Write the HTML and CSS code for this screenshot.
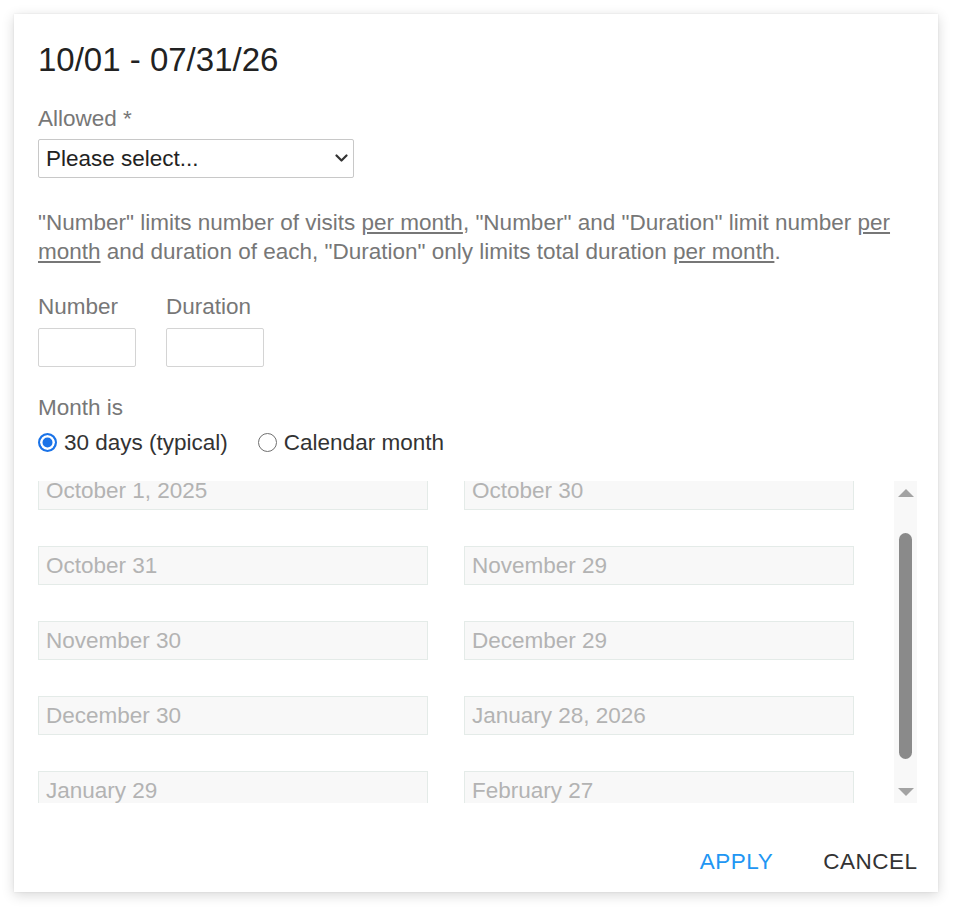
FILE: index.html
```html
<!DOCTYPE html>
<html lang="en">
<head>
<meta charset="utf-8">
<title>Allowed visits</title>
<link rel="stylesheet" href="styles.css">
</head>
<body>
<div class="page">
  <div class="dialog">
    <h1 class="title">10/01 - 07/31/26</h1>

    <label class="label label-allowed" for="allowed">Allowed *</label>
    <div class="select-wrap">
      <select id="allowed" class="select">
        <option>Please select...</option>
      </select>
      <svg class="chevron" width="13" height="9" viewBox="0 0 13 9"><polyline points="1.5,1.5 6.5,6.5 11.5,1.5" fill="none" stroke="#333" stroke-width="2.2" stroke-linecap="round" stroke-linejoin="round"/></svg>
    </div>

    <p class="help">"Number" limits number of visits <u>per month</u>, "Number" and "Duration" limit number <u>per month</u> and duration of each, "Duration" only limits total duration <u>per month</u>.</p>

    <div class="limits">
      <div class="limit">
        <label class="label">Number</label>
        <input class="small-input" type="text">
      </div>
      <div class="limit">
        <label class="label">Duration</label>
        <input class="small-input" type="text">
      </div>
    </div>

    <div class="label label-month">Month is</div>
    <div class="radios">
      <label class="radio"><input type="radio" name="month" checked><span>30 days (typical)</span></label>
      <label class="radio"><input type="radio" name="month"><span>Calendar month</span></label>
    </div>

    <div class="scroller">
      <div class="list">
        <div class="grid">
          <div class="field">October 1, 2025</div>
          <div class="field">October 30</div>
          <div class="field">October 31</div>
          <div class="field">November 29</div>
          <div class="field">November 30</div>
          <div class="field">December 29</div>
          <div class="field">December 30</div>
          <div class="field">January 28, 2026</div>
          <div class="field">January 29</div>
          <div class="field">February 27</div>
        </div>
      </div>
      <div class="scrollbar">
        <div class="sb-btn"><span class="tri-up"></span></div>
        <div class="sb-thumb"></div>
        <div class="sb-space"></div>
        <div class="sb-btn"><span class="tri-down"></span></div>
      </div>
    </div>

    <div class="actions">
      <button class="btn btn-apply">APPLY</button>
      <button class="btn btn-cancel">CANCEL</button>
    </div>
  </div>
</div>
</body>
</html>
```
FILE: styles.css
```css
* { box-sizing: border-box; }

html, body {
  margin: 0;
  padding: 0;
  background: #ffffff;
}

body {
  font-family: "Liberation Sans", Arial, sans-serif;
  font-size: 22.5px;
  color: #222;
}

.page {
  padding: 14px 20px 20px 14px;
}

.dialog {
  width: 924px;
  height: 878px;
  background: #fff;
  box-shadow: 0 3px 12px rgba(0, 0, 0, 0.16), 0 0 2px rgba(0, 0, 0, 0.08);
  padding: 26px 21px 16px 24px;
  display: flex;
  flex-direction: column;
}

.title {
  margin: 0;
  font-size: 33px;
  line-height: 40px;
  font-weight: 400;
  color: #222;
}

.label {
  display: block;
  font-size: 22.5px;
  line-height: 29px;
  color: #777;
}

.label-allowed {
  margin-top: 24px;
}

.select-wrap {
  position: relative;
  width: 316px;
  margin-top: 6px;
}

.select {
  appearance: none;
  -webkit-appearance: none;
  display: block;
  width: 316px;
  height: 39px;
  border: 1px solid #c8c8c8;
  border-radius: 2px;
  background: #fff;
  font-family: inherit;
  font-size: 22.5px;
  color: #222;
  padding: 0 30px 0 7px;
  outline: none;
}

.chevron {
  position: absolute;
  right: 6px;
  top: 15px;
  pointer-events: none;
}

.help {
  margin: 30px 0 0 0;
  font-size: 22.5px;
  line-height: 29px;
  color: #777;
}

.help u {
  text-decoration-color: #777;
  text-underline-offset: 2px;
}

.limits {
  display: flex;
  gap: 30px;
  margin-top: 26px;
}

.limit {
  display: flex;
  flex-direction: column;
}

.small-input {
  margin-top: 7px;
  width: 98px;
  height: 39px;
  border: 1px solid #d4d4d4;
  border-radius: 2px;
  background: #fff;
  font-family: inherit;
  font-size: 22.5px;
  outline: none;
}

.label-month {
  margin-top: 26px;
}

.radios {
  display: flex;
  gap: 30px;
  margin-top: 6px;
  line-height: 29px;
}

.radio {
  display: flex;
  align-items: center;
  gap: 7px;
  color: #333;
}

.radio input {
  appearance: none;
  -webkit-appearance: none;
  margin: 0;
  width: 19px;
  height: 19px;
  border-radius: 50%;
  border: 1.5px solid #707070;
  background: #fff;
}

.radio input:checked {
  border: 2px solid #1a73e8;
  background: #1a73e8;
  box-shadow: inset 0 0 0 2.5px #fff;
}

.scroller {
  display: flex;
  margin-top: 24px;
  height: 322px;
}

.list {
  flex: 1;
  overflow: hidden;
}

.grid {
  display: grid;
  grid-template-columns: 390px 390px;
  column-gap: 36px;
  row-gap: 36px;
  margin-top: -10px;
}

.field {
  height: 39px;
  background: #f8f8f8;
  border: 1px solid #e4ebe8;
  color: #b3b3b3;
  font-size: 22.5px;
  line-height: 37px;
  padding: 0 7px;
}

.scrollbar {
  width: 23px;
  background: #f8f8f8;
  display: flex;
  flex-direction: column;
  align-items: center;
}

.sb-btn {
  height: 23px;
  width: 23px;
  display: flex;
  align-items: center;
  justify-content: center;
}

.tri-up {
  width: 0;
  height: 0;
  border-left: 8px solid transparent;
  border-right: 8px solid transparent;
  border-bottom: 8px solid #a3a3a3;
}

.tri-down {
  width: 0;
  height: 0;
  border-left: 8px solid transparent;
  border-right: 8px solid transparent;
  border-top: 8px solid #a3a3a3;
}

.sb-thumb {
  margin-top: 29px;
  width: 13px;
  height: 226px;
  border-radius: 7px;
  background: #8a8a8a;
}

.sb-space {
  flex: 1;
}

.actions {
  margin-top: auto;
  display: flex;
  justify-content: flex-end;
  gap: 50px;
}

.btn {
  border: none;
  background: none;
  padding: 0;
  font-family: inherit;
  font-size: 22.5px;
  line-height: 29px;
  letter-spacing: 0.5px;
  cursor: pointer;
}

.btn-apply {
  color: #2196f3;
}

.btn-cancel {
  color: #333;
  margin-right: -0.5px;
}
```
